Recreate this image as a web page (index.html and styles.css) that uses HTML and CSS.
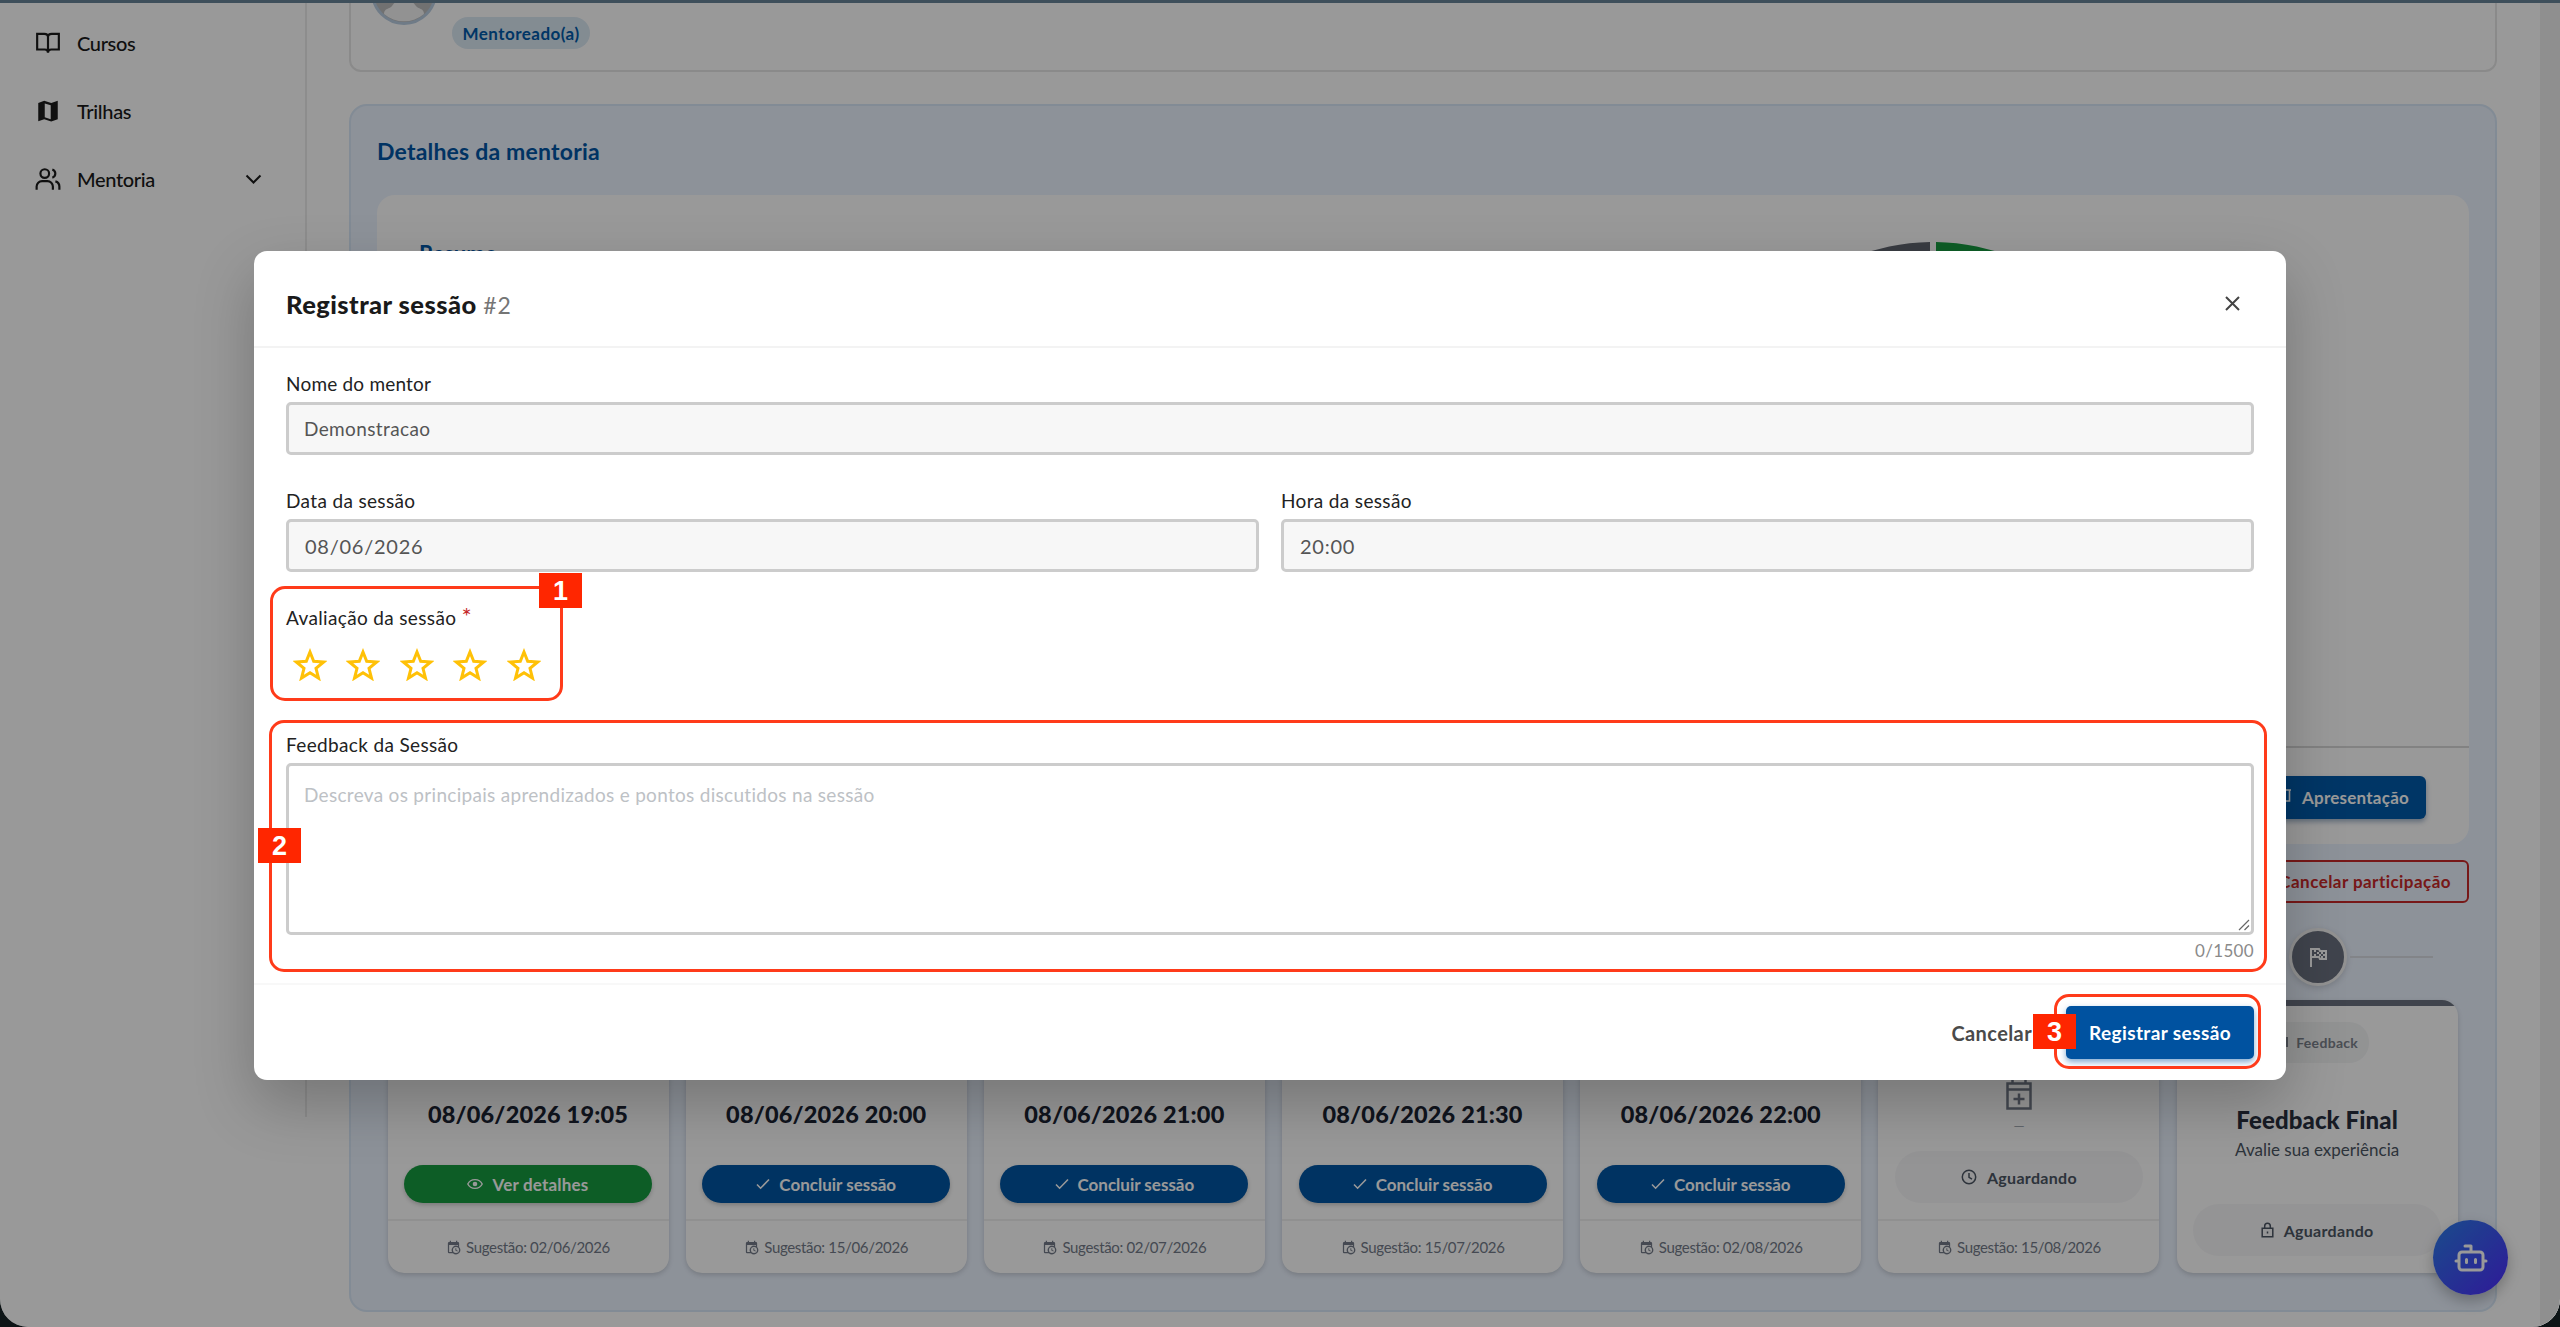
FILE: index.html
```html
<!DOCTYPE html>
<html lang="pt-BR">
<head>
<meta charset="utf-8">
<title>Registrar sessão</title>
<link rel="stylesheet" href="styles.css">
</head>
<body>
<svg class="defs" width="0" height="0">
  <symbol id="cal" viewBox="0 0 24 24"><path fill="currentColor" d="M15 13h1.500v2.800l2.400 1.400-.75 1.300L15 16.700V13m4-5H5v11h4.700A7 7 0 0 1 19 9.700V8M5 21a2 2 0 0 1-2-2V5a2 2 0 0 1 2-2h1V1h2v2h8V1h2v2h1a2 2 0 0 1 2 2v6.100A7 7 0 0 1 11.100 21H5m11-9.800a4.800 4.800 0 1 0 0 9.700 4.800 4.800 0 0 0 0-9.700z"/></symbol>
  <symbol id="check" viewBox="0 0 14 14"><path fill="none" stroke="currentColor" stroke-width="1.600" d="M1 7.500l3.600 3.700L13 2.500"/></symbol>
  <symbol id="star" viewBox="0 0 34 33"><path fill="none" stroke="currentColor" stroke-width="3" d="M17 4l3.700 9.300 10 .7-7.700 6.400 2.500 9.700L17 24.700l-8.500 5.400 2.500-9.700L3.300 14l10-.7z"/></symbol>
</svg>
<div class="window">
  <div class="app">
    <nav class="sidebar">
      <a class="nav-item"><svg width="26" height="26" viewBox="0 0 24 24"><path d="M12 6.500C12 4.500 10.500 3.500 8.500 3.500H2v14.500h7c2 0 3 1 3 3 0-2 1-3 3-3h7V3.500h-6.500c-2 0-3.500 1-3.500 3zV21"/></svg><span>Cursos</span></a>
      <a class="nav-item"><svg width="26" height="26" viewBox="0 0 24 24"><path class="solid" fill-rule="evenodd" d="M3 4.500 8.500 2.500 15 4.700 21 2.500v17l-6 2.200-6.500-2.200L3 21.500zM9 5v12.700l5.500 1.800V6.800z"/></svg><span>Trilhas</span></a>
      <a class="nav-item"><svg width="26" height="26" viewBox="0 0 24 24"><circle cx="9" cy="7" r="4"/><path d="M1.500 22v-3a5 5 0 0 1 5-5h5a5 5 0 0 1 5 5v3M16 3.200a4 4 0 0 1 0 7.600M22.500 22v-3a5 5 0 0 0-3.700-4.800"/></svg><span>Mentoria</span><svg class="chevron" width="17" height="10" viewBox="0 0 17 10"><path d="M1.500 1.500l7 7 7-7"/></svg></a>
    </nav>
    <main class="main">
      <section class="profile">
        <svg class="avatar" width="66" height="66" viewBox="0 0 66 66"><circle cx="33" cy="33" r="31.500" fill="#bdbdbd" stroke="#b9cde2" stroke-width="3"/><path fill="#f4f4f4" d="M33 41c7 0 10 3 12 6 2 3 8 2 8 8a31 31 0 0 1-40 0c0-6 6-5 8-8 2-3 5-6 12-6z"/><circle cx="33" cy="34" r="9" fill="#f4f4f4"/></svg>
        <span class="role">Mentoreado(a)</span>
      </section>
      <section class="panel">
        <h2 class="panel-title">Detalhes da mentoria</h2>
        <div class="summary">
          <div class="summary-body">
            <h3>Resumo</h3>
            <svg class="donut" width="424" height="424" viewBox="0 0 424 424"><path fill="#60646f" d="M209 1A211 211 0 0 0 1 212H60A152 152 0 0 1 209 60z"/><path fill="#169b40" d="M215 1A211 211 0 0 1 423 212H364A152 152 0 0 0 215 60z"/></svg>
          </div>
          <div class="summary-foot">
            <button class="btn-present"><svg width="20" height="20" viewBox="0 0 20 20"><path d="M1 2h18M2.500 2v11h15V2M7 18l3-5 3 5"/></svg><span>Apresentação</span></button>
          </div>
        </div>
        <div class="cancel-row"><button class="btn-leave">Cancelar participação</button></div>
        <div class="steps">
          <div class="step-dot"><svg width="19" height="20" viewBox="0 0 19 20"><path fill="none" stroke="#fff" stroke-width="2" d="M2 20V2h8l1 2h6v8h-6l-1-2H2"/><path fill="#fff" d="M5 3h2v2H5zM8 5h2v2H8zM5 7h2v2H5zM12 5h2v2h-2zM14 7h2v2h-2zM12 9h2v2h-2zM10 7h2v2h-2z"/></svg></div>
          <div class="step-line"></div>
        </div>
        <div class="cards">
          <article class="card"><div class="card-main"><strong class="date">08/06/2026 19:05</strong><button class="pill green"><svg width="16" height="16" viewBox="0 0 16 16"><path fill="none" stroke="currentColor" stroke-width="1.400" d="M.8 8C3.600 2.200 12.400 2.200 15.200 8 12.400 13.800 3.600 13.800.8 8z"/><circle cx="8" cy="8" r="2.300" fill="currentColor"/></svg><span>Ver detalhes</span></button></div><footer class="card-foot"><svg width="15" height="15"><use href="#cal"/></svg><span>Sugestão: 02/06/2026</span></footer></article>
          <article class="card"><div class="card-main"><strong class="date">08/06/2026 20:00</strong><button class="pill"><svg width="14" height="14"><use href="#check"/></svg><span>Concluir sessão</span></button></div><footer class="card-foot"><svg width="15" height="15"><use href="#cal"/></svg><span>Sugestão: 15/06/2026</span></footer></article>
          <article class="card"><div class="card-main"><strong class="date">08/06/2026 21:00</strong><button class="pill"><svg width="14" height="14"><use href="#check"/></svg><span>Concluir sessão</span></button></div><footer class="card-foot"><svg width="15" height="15"><use href="#cal"/></svg><span>Sugestão: 02/07/2026</span></footer></article>
          <article class="card"><div class="card-main"><strong class="date">08/06/2026 21:30</strong><button class="pill"><svg width="14" height="14"><use href="#check"/></svg><span>Concluir sessão</span></button></div><footer class="card-foot"><svg width="15" height="15"><use href="#cal"/></svg><span>Sugestão: 15/07/2026</span></footer></article>
          <article class="card"><div class="card-main"><strong class="date">08/06/2026 22:00</strong><button class="pill"><svg width="14" height="14"><use href="#check"/></svg><span>Concluir sessão</span></button></div><footer class="card-foot"><svg width="15" height="15"><use href="#cal"/></svg><span>Sugestão: 02/08/2026</span></footer></article>
          <article class="card"><div class="card-main"><svg class="plus" width="26" height="32" viewBox="0 0 26 32"><path d="M1.500 5.500h23v25h-23zM1.500 11.500h23M6.500 1v5M19.500 1v5M13 15.500v11M7.500 21h11"/></svg><span class="dash">—</span><div class="pill wait"><svg width="16" height="16" viewBox="0 0 16 16"><circle cx="8" cy="8" r="6.700"/><path d="M8 4v4.300l3 1.800"/></svg><span>Aguardando</span></div></div><footer class="card-foot"><svg width="15" height="15"><use href="#cal"/></svg><span>Sugestão: 15/08/2026</span></footer></article>
          <article class="card final"><span class="final-bar"></span><span class="tag-feedback"><svg width="14" height="14" viewBox="0 0 14 14"><path d="M1 2h12v8H5l-4 3z"/></svg><span>Feedback</span></span><strong class="final-title">Feedback Final</strong><span class="final-sub">Avalie sua experiência</span><div class="pill wait"><svg width="13" height="16" viewBox="0 0 13 16"><path d="M1.200 6.200h10.600v8.600H1.200zM3.700 6V4a2.800 2.800 0 0 1 5.600 0v2M6.500 9.500v2"/></svg><span>Aguardando</span></div></article>
        </div>
      </section>
    </main>
    <div class="scrollbar"></div>
    <div class="chat"><svg width="36" height="36" viewBox="0 0 24 24"><path d="M12 8V4H8M6 8h12a2 2 0 0 1 2 2v8a2 2 0 0 1-2 2H6a2 2 0 0 1-2-2v-8a2 2 0 0 1 2-2zM2 14h2M20 14h2M15 13v2M9 13v2"/></svg></div>
  </div>
  <div class="overlay">
    <div class="modal">
      <header class="modal-head"><h1>Registrar sessão <small>#2</small></h1><svg width="15" height="15" viewBox="0 0 15 15"><path d="M1 1l13 13M14 1L1 14"/></svg></header>
      <div class="modal-body">
        <div class="field"><label>Nome do mentor</label><div class="input">Demonstracao</div></div>
        <div class="field-row">
          <div class="field"><label>Data da sessão</label><div class="input num">08/06/2026</div></div>
          <div class="field"><label>Hora da sessão</label><div class="input num">20:00</div></div>
        </div>
        <div class="field"><label>Avaliação da sessão <b class="req">*</b></label>
          <div class="stars"><svg width="34" height="33"><use href="#star"/></svg><svg width="34" height="33"><use href="#star"/></svg><svg width="34" height="33"><use href="#star"/></svg><svg width="34" height="33"><use href="#star"/></svg><svg width="34" height="33"><use href="#star"/></svg></div></div>
        <div class="field"><label>Feedback da Sessão</label>
          <div class="area"><span>Descreva os principais aprendizados e pontos discutidos na sessão</span><svg class="grip" width="12" height="12" viewBox="0 0 12 12"><path d="M1 11L11 1M6.500 11L11 6.500"/></svg></div>
          <div class="count">0/1500</div></div>
      </div>
      <footer class="modal-foot"><span class="cancel">Cancelar</span><button class="save">Registrar sessão</button></footer>
      <div class="mark mark-1"></div><div class="mark mark-2"></div><div class="mark mark-3"></div>
      <b class="num-tag tag-1">1</b><b class="num-tag tag-2">2</b><b class="num-tag tag-3">3</b>
    </div>
  </div>
  <div class="topline"></div>
</div>
</body>
</html>
```
FILE: styles.css
```css
* { box-sizing: border-box; }
body { margin: 0; background: #0d1416; font-family: Lato, "Liberation Sans", sans-serif; color: #1a1a1a; }
h1, h2, h3 { margin: 0; }
button { font-family: inherit; border: 0; }
svg { flex: none; display: block; }
.defs { position: absolute; }
.window { position: relative; width: 2560px; height: 1327px; overflow: hidden; border-radius: 0 0 28px 28px; background: #fff; }
.app { display: flex; height: 1327px; overflow: hidden; }

.sidebar { width: 307px; height: 1117px; border-right: 2px solid #ebebeb; padding-top: 9px; }
.nav-item { display: flex; align-items: center; height: 68px; padding: 0 43px 0 35px; font-size: 20px; font-weight: 500; letter-spacing: -.35px; }
.nav-item svg { fill: none; stroke: #1c1c1c; stroke-width: 2; margin-right: 16px; }
.nav-item svg .solid { fill: #1c1c1c; stroke: none; }
.nav-item .chevron { margin: 0 0 0 auto; }

.main { flex: 1; padding: 0 43px 0 42px; overflow: hidden; }
.profile { display: flex; height: 122px; margin-top: -50px; border: 2px solid #e6e6e6; border-radius: 12px; padding: 7px 0 0 20px; }
.role { display: flex; align-items: center; justify-content: center; width: 138px; height: 32px; margin: 58px 0 0 15px; border-radius: 16px; background: #dbe9f4; color: #005aaa; font-size: 17px; font-weight: 700; letter-spacing: .47px; }
.panel { height: 1208px; margin-top: 32px; border: 2px solid #d9e8f8; border-radius: 18px; background: #ebf3ff; padding: 30px 26px 0; }
.panel-title { height: 59px; font-size: 23px; line-height: 30px; font-weight: 700; color: #0055a5; letter-spacing: .2px; }
.summary { display: flex; flex-direction: column; height: 649px; border-radius: 18px; background: #fff; }
.summary-body { flex: 1; display: flex; justify-content: space-between; padding: 41px 324px 0 42px; overflow: hidden; }
.summary-body h3 { color: #0055a5; font-size: 22px; line-height: 36px; }
.donut { margin-top: 5px; }
.summary-foot { display: flex; justify-content: flex-end; height: 98px; border-top: 2px solid #d9d9d9; padding: 28px 43px 0; }
.btn-present { display: flex; align-items: center; justify-content: flex-end; gap: 10px; height: 43px; width: 170px; padding: 0 17px; border-radius: 6px; background: #005aaa; color: #fff; font-size: 17px; font-weight: 700; letter-spacing: .23px; box-shadow: 0 3px 5px rgba(0, 50, 110, .35); }
.btn-present svg { fill: none; stroke: #fff; stroke-width: 1.600; }
.cancel-row { display: flex; justify-content: flex-end; padding-top: 16px; }
.btn-leave { height: 43px; width: 226px; padding: 0 16px; border: 2px solid #c62828; border-radius: 6px; background: transparent; color: #c62828; font-size: 17px; font-weight: 700; letter-spacing: .45px; text-align: right; white-space: nowrap; }
.steps { display: flex; justify-content: flex-end; align-items: center; gap: 3px; height: 97px; padding: 10px 36px 0 0; }
.step-dot { display: flex; align-items: center; justify-content: center; width: 58px; height: 58px; border: 3px solid #f4f4f4; border-radius: 50%; background: #6b7280; box-shadow: 0 2px 6px rgba(0, 0, 0, .15); }
.step-line { width: 83px; height: 2px; background: #d9dde3; }
.cards { display: grid; grid-template-columns: repeat(7, 281px); column-gap: 17.200px; padding-left: 10.500px; }
.card { display: flex; flex-direction: column; height: 273px; border-radius: 16px; background: #fff; box-shadow: 0 2px 5px rgba(0, 0, 0, .16); }
.card-main { flex: 1; display: flex; flex-direction: column; align-items: center; padding: 79px 17px 0; }
.date { height: 86px; font-size: 23.500px; line-height: 70px; font-weight: 900; color: #1b2433; letter-spacing: .17px; }
.pill { display: flex; align-items: center; justify-content: center; gap: 9px; width: 248px; height: 38px; border-radius: 20px; background: #0055a4; color: #fff; font-size: 17px; font-weight: 700; box-shadow: 0 2px 4px rgba(0, 0, 0, .2); }
.green { background: #169b40; letter-spacing: .2px; }
.card-foot { display: flex; align-items: center; justify-content: center; gap: 5px; height: 54px; border-top: 2px solid #f0f0f0; font-size: 15px; letter-spacing: -.33px; color: #737b89; }
.plus { margin-top: -1px; fill: none; stroke: #737b89; stroke-width: 2.500; }
.dash { height: 41px; line-height: 32px; font-size: 14px; color: #a6acb5; }
.wait { height: 52px; border-radius: 26px; background: #f7f7f9; color: #4b5563; box-shadow: none; gap: 10px; font-size: 16px; letter-spacing: .3px; }
.wait svg { fill: none; stroke: #4b5563; stroke-width: 1.500; }
.final { align-items: center; overflow: hidden; }
.final-bar { width: 100%; height: 6px; margin-bottom: 16px; background: #6b7280; }
.tag-feedback { display: flex; align-items: center; justify-content: flex-end; gap: 8px; width: 104px; height: 41px; padding-right: 11px; border-radius: 20px; background: #f4f5f6; color: #7c828c; font-size: 14px; letter-spacing: .3px; font-weight: 700; }
.tag-feedback svg { fill: none; stroke: #7c828c; stroke-width: 2; }
.final-title { margin-top: 42px; height: 30px; line-height: 30px; font-size: 24px; font-weight: 900; letter-spacing: .1px; color: #28303f; }
.final-sub { height: 69px; line-height: 30px; font-size: 17px; color: #4b5563; }
.scrollbar { width: 20px; background: #eee; }
.chat { position: absolute; left: 2433px; top: 1220px; display: flex; align-items: center; justify-content: center; width: 75px; height: 75px; border-radius: 50%; background: linear-gradient(135deg, #2b7fe8, #4f2bff); box-shadow: 0 6px 14px rgba(0, 0, 0, .25); }
.chat svg { fill: none; stroke: #fff; stroke-width: 2; stroke-linecap: round; stroke-linejoin: round; }

.overlay { position: absolute; inset: 0; background: rgba(0, 0, 0, .4); padding: 251px 0 0 254px; }
.modal { position: relative; display: flex; flex-direction: column; width: 2032px; height: 829px; border-radius: 13px; background: #fff; box-shadow: 0 24px 60px rgba(0, 0, 0, .23); }
.modal-head { display: flex; align-items: center; justify-content: space-between; height: 97px; padding: 10px 46px 0 32px; border-bottom: 2px solid #f3f3f3; }
.modal-head h1 { font-size: 25.500px; font-weight: 900; letter-spacing: .45px; }
.modal-head small { font-size: 23px; font-weight: 400; color: #757575; letter-spacing: 1px; }
.modal-head svg { fill: none; stroke: #444; stroke-width: 2; }
.modal-body { display: flex; flex-direction: column; height: 635px; padding: 20px 32px 0; }
.field { flex: 1 1 0; }
.field label { display: block; height: 34px; line-height: 31px; font-size: 19px; letter-spacing: .2px; color: #222; }
.input { display: flex; align-items: center; height: 53px; border: 3px solid #ccc; border-radius: 5px; background: #f7f7f7; padding-left: 15px; font-size: 19px; letter-spacing: .38px; color: #555; }
.num { padding-left: 16px; font-size: 20px; letter-spacing: .75px; }
.modal-body > .field, .field-row { flex: none; height: 117px; }
.field-row { display: flex; gap: 22px; }
.field-row label { letter-spacing: .35px; }
.req { color: #c62828; font-weight: 400; font-size: 24px; line-height: 20px; }
.stars { display: flex; gap: 19.400px; padding: 12px 7px; color: #ffc107; }
.modal-body > .field:nth-child(3) { height: 127px; }
.modal-body > .field:nth-child(n+3) label { letter-spacing: .35px; }
.area { display: flex; justify-content: space-between; height: 172px; border: 3px solid #ccc; border-radius: 5px; padding: 15px 1px 1px 15px; font-size: 19px; letter-spacing: .3px; line-height: 28px; color: #bdc1c5; }
.grip { align-self: flex-end; fill: none; stroke: #666; stroke-width: 1.200; }
.count { text-align: right; line-height: 32px; font-size: 17px; letter-spacing: .33px; color: #8a8a8a; }
.modal-foot { display: flex; justify-content: flex-end; align-items: center; height: 97px; border-top: 2px solid #f8f8f8; padding-right: 32px; }
.cancel { margin-right: 34px; font-size: 20px; font-weight: 700; letter-spacing: .4px; color: #4a4a4a; }
.save { width: 188px; height: 53px; padding: 0; border-radius: 5px; background: #0052a0; color: #fff; font-size: 19px; font-weight: 700; letter-spacing: .4px; box-shadow: 0 3px 6px rgba(0, 82, 160, .5); }

/* numbered call-outs laid over the dialog */
.mark { position: absolute; border: 3px solid #ff3b1a; border-radius: 15px; }
.mark-1 { left: 16px; top: 335px; width: 293px; height: 115px; }
.mark-2 { left: 15px; top: 469px; width: 1998px; height: 252px; }
.mark-3 { left: 1800px; top: 743px; width: 207px; height: 75px; }
.num-tag { position: absolute; width: 43px; height: 35px; background: #ff2600; color: #fff; font: 700 27px/36px "Liberation Sans", Arial, sans-serif; text-align: center; }
.tag-1 { left: 285px; top: 322px; }
.tag-2 { left: 4px; top: 577px; }
.tag-3 { left: 1779px; top: 763px; }
.topline { position: absolute; left: 0; top: 0; width: 2560px; height: 3px; background: #3e4f5b; }
```
